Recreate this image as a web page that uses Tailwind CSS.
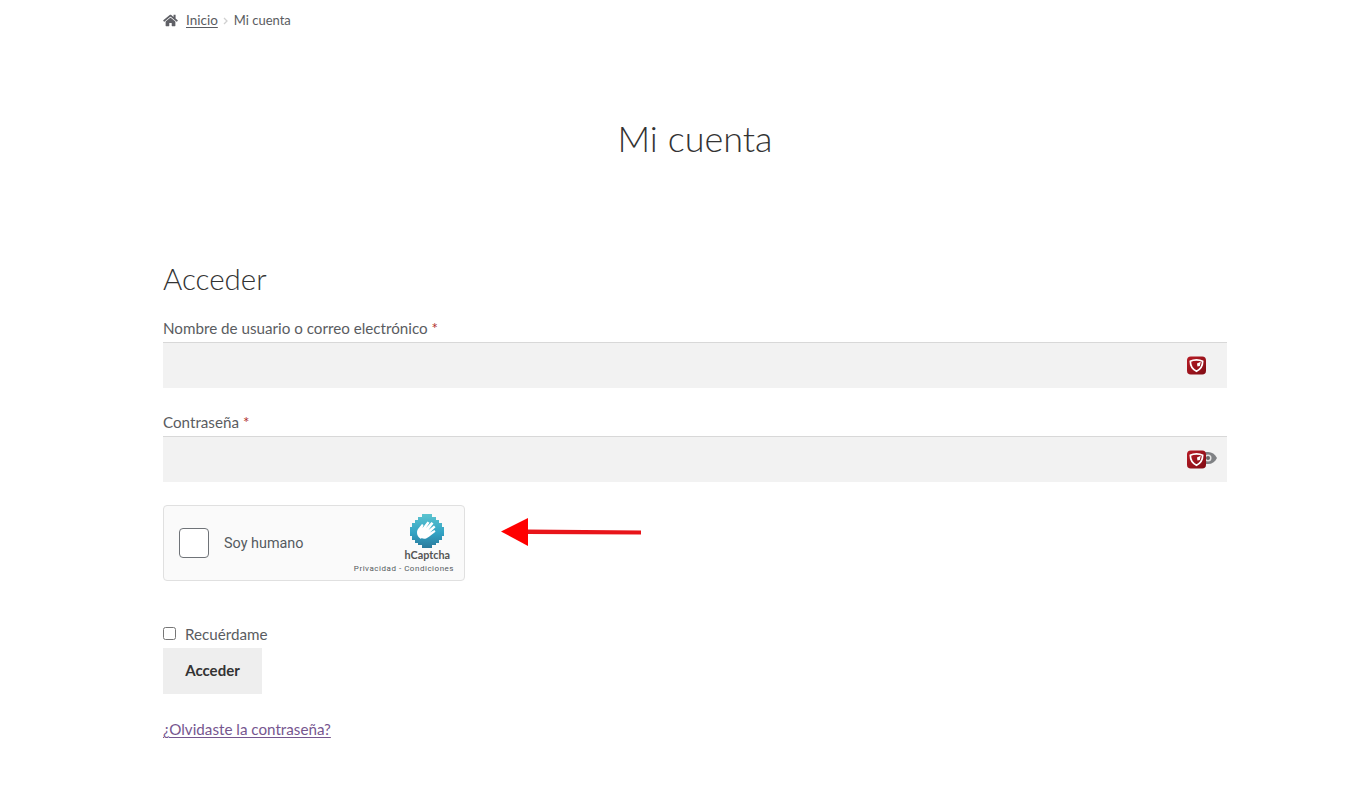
<!DOCTYPE html>
<html lang="es">
<head>
    <meta charset="UTF-8">
    <meta name="viewport" content="width=device-width, initial-scale=1.0">
    <title>Mi cuenta</title>
    <script src="https://cdn.jsdelivr.net/npm/@tailwindcss/browser@4"></script>
</head>
<body class="bg-white text-[#43454b] font-['Lato','Noto_Sans',sans-serif] overflow-hidden h-[789px]">
    <svg class="absolute w-0 h-0">
        <defs>
            <linearGradient id="shieldBg" x1="0" y1="0" x2="1" y2="1"><stop offset="0" stop-color="#b81c26"/><stop offset="1" stop-color="#800c14"/></linearGradient>
            <linearGradient id="handBg" x1="0" y1="0" x2="0" y2="1"><stop offset="0" stop-color="#5cc4cf"/><stop offset="0.55" stop-color="#33a3c4"/><stop offset="1" stop-color="#2a7a9c"/></linearGradient>
        </defs>
    </svg>
    <div class="w-[1064px] ml-[163px]">
        <!-- Breadcrumb -->
        <nav class="flex items-center h-[13px] mt-[14px] text-[13.500px] leading-none text-[#5a5c61]">
            <svg class="w-[15px] h-[13px] mr-2" viewBox="0 0 576 512" fill="#5f6066"><path d="M280 148 96 300v164c0 9 7 16 16 16l112-1c9 0 16-7 16-16v-95c0-9 7-16 16-16h64c9 0 16 7 16 16v95c0 9 7 16 16 16l112 1c9 0 16-7 16-16V300L296 148c-5-4-11-4-16 0zM572 251l-84-69V44c0-7-5-12-12-12h-56c-7 0-12 5-12 12v72l-90-74c-18-15-43-15-61 0L4 251c-5 4-6 12-2 17l26 31c4 5 12 6 17 2L280 107c5-4 11-4 16 0l235 194c5 4 13 3 17-2l26-31c4-5 3-13-2-17z"/></svg>
            <a href="#" class="underline underline-offset-2">Inicio</a>
            <svg class="w-[5px] h-[8px] mx-[5.500px]" viewBox="0 0 5 8" fill="none" stroke="#d0d0d0" stroke-width="1.300"><path d="M1 1l3 3-3 3"/></svg>
            <span class="text-[13px]">Mi cuenta</span>
        </nav>

        <h1 class="mt-[86px] text-center text-[36px] leading-[50px] font-light text-[#333]">Mi cuenta</h1>

        <h2 class="mt-[97px] text-[29.500px] leading-[38px] font-light text-[#333]">Acceder</h2>

        <form class="mt-[18px]">
            <label class="block text-[15.200px] leading-[24px] text-[#5a5c61]">Nombre de usuario o correo electrónico <span class="text-[#b0302c]">*</span></label>
            <div class="relative mt-[2px] h-[46px] bg-[#f2f2f2] border-t border-[#d8d8d8]">
                <svg class="absolute left-[1024px] top-[13px] w-[19px] h-[19px]" viewBox="0 0 20 19"><rect width="20" height="19" rx="4" fill="url(#shieldBg)"/><path d="M3.500 5C7 3 13 3 16.500 5 16.500 10 13.500 13.800 10 15.500 6.500 13.800 3.500 10 3.500 5Z" fill="none" stroke="#fff" stroke-width="1.800"/><path d="M10.500 7.500l4-2-1 4.500-2.500.5z" fill="#fff"/></svg>
            </div>

            <label class="block mt-[22px] text-[15.200px] leading-[24px] text-[#5a5c61]">Contraseña <span class="text-[#b0302c]">*</span></label>
            <div class="relative mt-[2px] h-[46px] bg-[#f2f2f2] border-t border-[#d8d8d8]">
                <svg class="absolute left-[1035px] top-[15px] w-[19px] h-[12px]" viewBox="0 0 19 12"><path d="M0 6C3 1 6 0 10 0s7 2 9 6c-2 4-5 6-9 6S3 11 0 6z" fill="#808285"/><circle cx="10" cy="6" r="3.500" fill="#e4e4e4"/><circle cx="10" cy="6" r="2" fill="#666"/></svg>
                <svg class="absolute left-[1024px] top-[13px] w-[19px] h-[19px]" viewBox="0 0 20 19"><rect width="20" height="19" rx="4" fill="url(#shieldBg)"/><path d="M3.500 5C7 3 13 3 16.500 5 16.500 10 13.500 13.800 10 15.500 6.500 13.800 3.500 10 3.500 5Z" fill="none" stroke="#fff" stroke-width="1.800"/><path d="M10.500 7.500l4-2-1 4.500-2.500.5z" fill="#fff"/></svg>
            </div>

            <!-- Captcha + arrow -->
            <div class="flex items-start mt-[23px]">
                <div class="relative w-[302px] h-[76px] bg-[#fafafa] border border-[#e0e0e0] rounded-[4px] font-['Roboto',sans-serif]">
                    <div class="absolute left-[15px] top-[22px] w-[30px] h-[30px] bg-white border border-[#6f7378] rounded-[4px]"></div>
                    <span class="absolute left-[60px] top-[29px] text-[14.400px] leading-[18px] text-[#555a5f]">Soy humano</span>
                    <svg class="absolute left-[246px] top-[8px] w-[34px] h-[34px]" viewBox="0 0 34 34">
                        <path d="M12 0h10v3h4v3h3v3h3v4h2v9h-2v4h-3v3h-3v2h-4v3H12v-3H8v-2H5v-3H2v-4H0v-9h2V9h3V6h3V3h4z" fill="url(#handBg)"/>
                        <path d="M11 25c-4-2-5-7-3-10l4-5 1.500 1-1 3 5-6.500 2 1.300-3.500 5.200 5.500-6 2 1.500-5 6.500 5.500-4.500 1.500 1.700-5.500 5.300 4.500-2.500 1 1.700-6.500 5c-2.500 2-5 2.800-7.500 1.300z" fill="#fff"/>
                    </svg>
                    <span class="absolute right-[14px] top-[42px] text-[10.800px] leading-[13px] font-bold text-[#555] font-['Lato',sans-serif]">hCaptcha</span>
                    <span class="absolute right-[10px] top-[57px] text-[8px] leading-[11px] tracking-[0.520px] text-[#555a5f]">Privacidad - Condiciones</span>
                </div>
                <svg class="ml-[35px] mt-[12px] w-[142px] h-[30px]" viewBox="0 0 142 30"><path d="M27 12.500 141 13.500v4L27 17z" fill="#e8141a"/><path d="M1 14.500 28 1v28z" fill="#f00"/></svg>
            </div>

            <label class="flex items-center mt-[43px] h-[20px] text-[15.200px] text-[#5a5c61]">
                <span class="block w-[13px] h-[13px] mr-[9px] -mt-[2px] bg-white border border-[#767676] rounded-[2.500px]"></span>
                Recuérdame
            </label>
            <button type="button" class="block mt-[4px] w-[99px] h-[46px] bg-[#eeeeee] text-[15px] font-bold text-[#333] pb-[2px]">Acceder</button>
        </form>

        <a href="#" class="block mt-[24px] text-[15.200px] leading-[22px] text-[#76568f] underline underline-offset-2 decoration-1">¿Olvidaste la contraseña?</a>
    </div>
</body>
</html>
